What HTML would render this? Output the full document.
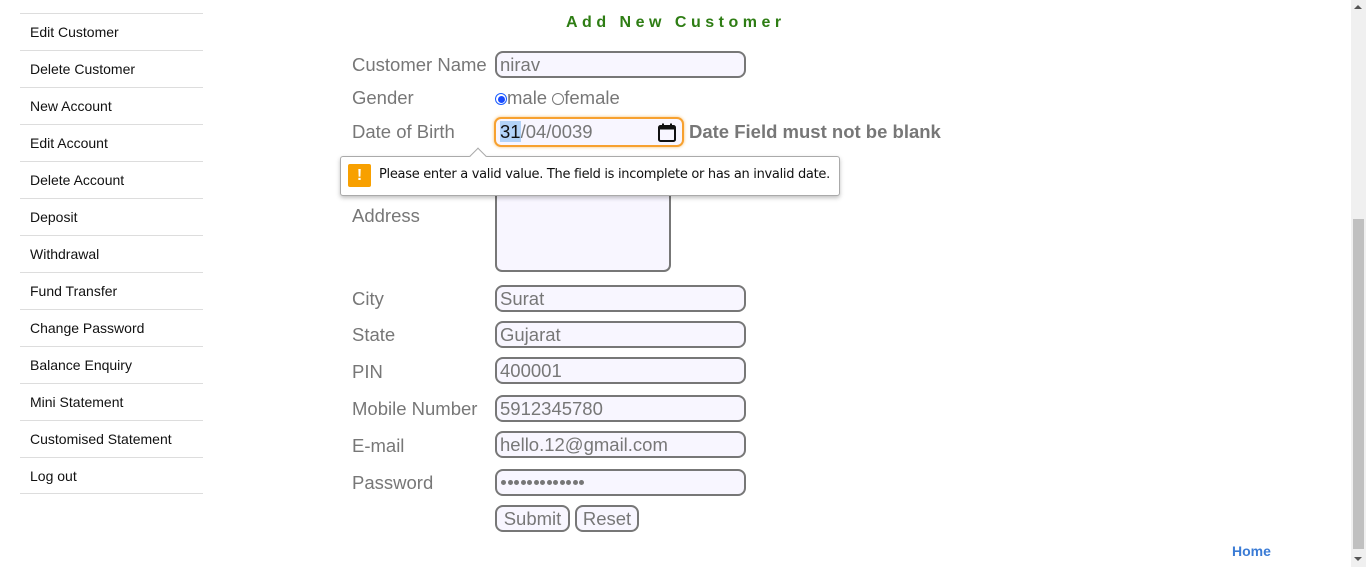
<!DOCTYPE html>
<html><head><style>
body{margin:0;width:1366px;height:567px;overflow:hidden;background:#fff;font-family:"Liberation Sans",sans-serif;position:relative}
.a{position:absolute}
.nav{left:20px;width:183px;height:37px;border-top:1px solid #ddd;box-sizing:border-box;font-size:14px;color:#111;padding-left:10px;line-height:36px}
.lb{left:352px;font-size:18.5px;color:#777;line-height:22px}
.in{left:495px;width:251px;height:27px;box-sizing:border-box;border:2px solid #777;border-radius:8px;background:#f8f6ff;font-size:18.5px;color:#777;padding-left:3px;line-height:23px}
.bt{height:27px;top:505px;box-sizing:border-box;border:2px solid #777;border-radius:8px;background:#f8f6ff;font-size:18.5px;color:#777;line-height:23px;text-align:center}
.d{display:inline-block;width:5px;height:5px;border-radius:50%;background:#777;margin-right:1.5px}
</style></head><body>
<div class="a nav" style="top:13px">Edit Customer</div>
<div class="a nav" style="top:50px">Delete Customer</div>
<div class="a nav" style="top:87px">New Account</div>
<div class="a nav" style="top:124px">Edit Account</div>
<div class="a nav" style="top:161px">Delete Account</div>
<div class="a nav" style="top:198px">Deposit</div>
<div class="a nav" style="top:235px">Withdrawal</div>
<div class="a nav" style="top:272px">Fund Transfer</div>
<div class="a nav" style="top:309px">Change Password</div>
<div class="a nav" style="top:346px">Balance Enquiry</div>
<div class="a nav" style="top:383px">Mini Statement</div>
<div class="a nav" style="top:420px">Customised Statement</div>
<div class="a nav" style="top:457px;border-bottom:1px solid #ddd">Log out</div>

<div class="a" style="left:566px;top:14px;font-size:16px;font-weight:bold;color:#2e7d14;letter-spacing:4.5px">Add New Customer</div>

<div class="a lb" style="top:54px">Customer Name</div>
<div class="a in" style="top:51px">nirav</div>
<div class="a lb" style="top:87px">Gender</div>
<div class="a" style="left:495px;top:87px;font-size:18.5px;color:#777;line-height:22px"><span style="display:inline-block;width:12px;height:12px;border:1px solid #1a5cff;border-radius:50%;box-sizing:border-box;position:relative;vertical-align:-1px"><span style="position:absolute;left:1.5px;top:1.5px;width:7px;height:7px;border-radius:50%;background:#1a4bff"></span></span>male <span style="display:inline-block;width:12px;height:12px;border:1px solid #777;border-radius:50%;box-sizing:border-box;vertical-align:-1px"></span>female</div>
<div class="a lb" style="top:121px">Date of Birth</div>
<div class="a" style="left:494px;top:117px;width:190px;height:30px;box-sizing:border-box;border:2px solid #f7a130;border-radius:7px;background:#f8f6ff;box-shadow:0 0 3px #f9c070;font-size:18.5px;color:#777;line-height:26px;padding-left:4px"><span style="background:#b3d3f8;color:#111">31</span>/04/0039
<svg class="a" style="right:5px;top:4px" width="20" height="20" viewBox="0 0 20 20"><rect x="2" y="3" width="16" height="15" rx="1.5" fill="none" stroke="#111" stroke-width="2"/><rect x="2" y="3" width="16" height="3.5" fill="#111"/><rect x="5" y="0.5" width="2" height="3" fill="#111"/><rect x="13" y="0.5" width="2" height="3" fill="#111"/></svg></div>
<div class="a" style="left:689px;top:121px;font-size:18.5px;font-weight:bold;color:#777;line-height:22px">Date Field must not be blank</div>

<div class="a lb" style="top:205px">Address</div>
<div class="a" style="left:495px;top:170px;width:176px;height:102px;box-sizing:border-box;border:2px solid #777;border-radius:7px;background:#f8f6ff"></div>

<div class="a" style="left:340px;top:156px;width:500px;height:40px;box-sizing:border-box;border:1px solid #aaa;border-radius:3px;background:#fff;box-shadow:0 2px 4px rgba(0,0,0,.25)"></div>
<div class="a" style="left:472px;top:150px;width:11px;height:11px;background:#fff;border-left:1px solid #aaa;border-top:1px solid #aaa;transform:rotate(45deg)"></div>
<div class="a" style="left:348px;top:164px;width:23px;height:23px;background:#f8a000;border-radius:2px;color:#fff;font-weight:bold;text-align:center;line-height:23px;font-size:16px">!</div>
<div class="a" style="left:379px;top:166px;font-family:'DejaVu Sans',sans-serif;font-size:13px;color:#111;line-height:18px;letter-spacing:-0.3px">Please enter a valid value. The field is incomplete or has an invalid date.</div>

<div class="a lb" style="top:288px">City</div><div class="a in" style="top:285px">Surat</div>
<div class="a lb" style="top:324px">State</div><div class="a in" style="top:321px">Gujarat</div>
<div class="a lb" style="top:361px">PIN</div><div class="a in" style="top:357px">400001</div>
<div class="a lb" style="top:398px">Mobile Number</div><div class="a in" style="top:395px">5912345780</div>
<div class="a lb" style="top:435px">E-mail</div><div class="a in" style="top:431px">hello.12@gmail.com</div>
<div class="a lb" style="top:472px">Password</div>
<div class="a in" style="top:469px;padding-left:4px;line-height:0;padding-top:8px"><span class="d"></span><span class="d"></span><span class="d"></span><span class="d"></span><span class="d"></span><span class="d"></span><span class="d"></span><span class="d"></span><span class="d"></span><span class="d"></span><span class="d"></span><span class="d"></span><span class="d"></span></div>
<div class="a bt" style="left:495px;width:75px">Submit</div>
<div class="a bt" style="left:575px;width:64px">Reset</div>

<div class="a" style="left:1232px;top:543px;font-size:14px;font-weight:bold;color:#3a7bd5">Home</div>

<div class="a" style="left:1351px;top:0;width:15px;height:567px;background:#f0f0f0"></div>
<div class="a" style="left:1353px;top:219px;width:11px;height:330px;background:#c0c0c0"></div>
<div class="a" style="left:1354px;top:5px;width:0;height:0;border-left:4px solid transparent;border-right:4px solid transparent;border-bottom:4px solid #555"></div>
<div class="a" style="left:1354px;top:557px;width:0;height:0;border-left:4px solid transparent;border-right:4px solid transparent;border-top:4px solid #555"></div>
</body></html>
